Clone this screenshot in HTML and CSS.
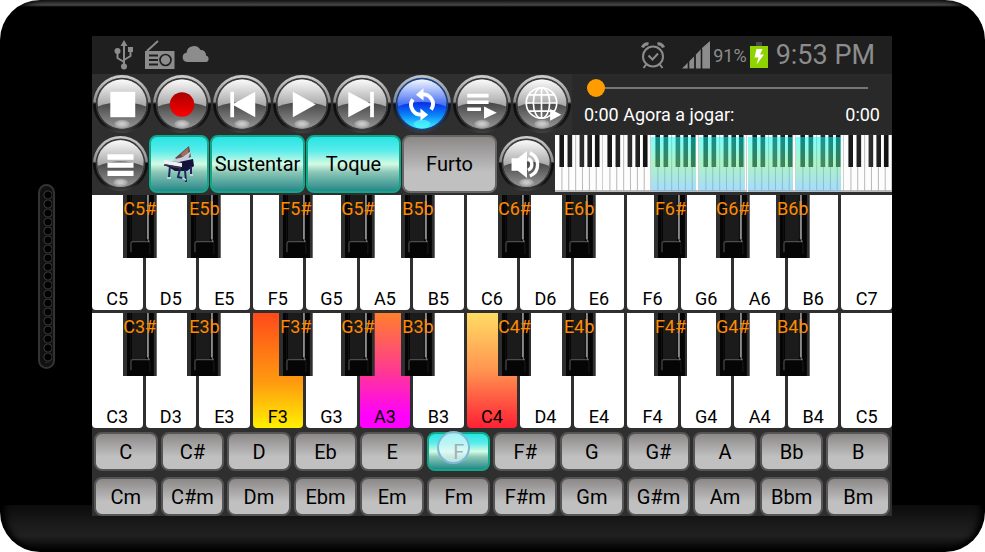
FILE: index.html
```html
<!DOCTYPE html>
<html lang="pt">
<head>
  <meta charset="UTF-8" />
  <meta name="viewport" content="width=device-width, initial-scale=1" />
  <title>Piano</title>
  <link rel="stylesheet" href="styles.css">
</head>
<body>
  <!-- Shared shapes -->
  <svg class="defs" width="0" height="0" aria-hidden="true">
    <defs>
      <linearGradient id="ring" x1="0" y1="0" x2="0" y2="1">
        <stop offset="0" stop-color="#d0d0d0" />
        <stop offset="0.46" stop-color="#8a8a8a" />
        <stop offset="0.5" stop-color="#0c0c0c" />
        <stop offset="0.85" stop-color="#161616" />
        <stop offset="1" stop-color="#444" />
      </linearGradient>
      <linearGradient id="ringBlue" x1="0" y1="0" x2="0" y2="1">
        <stop offset="0" stop-color="#c0c4cc" />
        <stop offset="0.46" stop-color="#7c869a" />
        <stop offset="0.5" stop-color="#0a1228" />
        <stop offset="1" stop-color="#343c48" />
      </linearGradient>
      <linearGradient id="glass" x1="0" y1="0" x2="0" y2="1">
        <stop offset="0" stop-color="#fafafa" />
        <stop offset="0.5" stop-color="#acacac" />
      </linearGradient>
      <linearGradient id="glassLow" x1="0" y1="0" x2="0" y2="1">
        <stop offset="0" stop-color="#444" />
        <stop offset="1" stop-color="#969696" />
      </linearGradient>
      <linearGradient id="blue" x1="0" y1="0" x2="0" y2="1">
        <stop offset="0" stop-color="#f2f6ff" />
        <stop offset="0.5" stop-color="#4a72f4" />
      </linearGradient>
      <linearGradient id="blueLow" x1="0" y1="0" x2="0" y2="1">
        <stop offset="0" stop-color="#0a28e8" />
        <stop offset="0.5" stop-color="#0a86f8" />
        <stop offset="1" stop-color="#3cf4ff" />
      </linearGradient>
      <radialGradient id="shine">
        <stop offset="0.3" stop-color="#d0d0d0" stop-opacity="0.9" />
        <stop offset="1" stop-color="#d0d0d0" stop-opacity="0.3" />
      </radialGradient>
      <linearGradient id="red" x1="0" y1="0" x2="0" y2="1">
        <stop offset="0" stop-color="#a80000" />
        <stop offset="1" stop-color="#ff0000" />
      </linearGradient>
      <linearGradient id="ebony" x1="0" y1="0" x2="1" y2="0">
        <stop offset="0" stop-color="#161616" />
        <stop offset="0.55" stop-color="#2e2e2e" />
        <stop offset="1" stop-color="#101010" />
      </linearGradient>
    </defs>
    <symbol id="orb" viewBox="0 0 57 57">
      <circle cx="28.5" cy="28.5" r="28.5" fill="url(#ring)" />
      <circle cx="28.5" cy="28.5" r="25" fill="none" stroke="#3a3a3a" stroke-width="1.6" />
      <circle cx="28.5" cy="28.5" r="24" fill="url(#glass)" />
      <path d="M4.6 31 Q28.5 22 52.4 31 A24 24 0 0 1 4.6 31Z" fill="url(#glassLow)" />
      <ellipse cx="28.5" cy="48" rx="7.5" ry="4" fill="url(#shine)" />
    </symbol>
    <symbol id="orb-blue" viewBox="0 0 57 57">
      <circle cx="28.5" cy="28.5" r="28.5" fill="url(#ringBlue)" />
      <circle cx="28.5" cy="28.5" r="25" fill="none" stroke="#1c4480" stroke-width="1.6" />
      <circle cx="28.5" cy="28.5" r="24" fill="url(#blue)" />
      <path d="M4.6 31 Q28.5 22 52.4 31 A24 24 0 0 1 4.6 31Z" fill="url(#blueLow)" />
      <ellipse cx="28.5" cy="48" rx="8" ry="4" fill="#5cfcff" opacity="0.6" />
    </symbol>
    <symbol id="black-key" viewBox="0 0 34 63" preserveAspectRatio="none">
      <path d="M0 0h34v63H0z" fill="#2f2f2f" />
      <path d="M4 0h27v63H4z" fill="#050505" />
      <path d="M9 0h14v46H9z" fill="#1b1b1b" />
      <path d="M7 0h1v47H7z" fill="#111" />
      <path d="M24 0h2v44h-2z" fill="#8a8a8a" />
      <path d="M8 57V48Q8 46.5 10 46.5H26" fill="none" stroke="#4c4c4c" stroke-width="1.2" />
      <path d="M25 44l1.500 3" stroke="#777" stroke-width="1.2" />
      <path d="M27 48v11" stroke="#1c1c1c" />
    </symbol>
    <symbol id="octave" viewBox="0 0 48 57" preserveAspectRatio="none">
      <path d="M0 0h48v57H0z" fill="#fdfdfd" />
      <path d="M0 55h48v2H0z" fill="#bcbcbc" />
      <path d="M6.900 0v56M13.700 0v56M20.600 0v56M27.400 0v56M34.300 0v56M41.100 0v56M47.700 0v56" stroke="#a8a8a8" stroke-width="0.8" />
      <path d="M4.400 0h4.600v32H4.400zM12.500 0h4.600v32h-4.600zM24.500 0h4.600v32h-4.600zM32.300 0h4.600v32h-4.600zM39.800 0h4.600v32h-4.600z" fill="url(#ebony)" />
    </symbol>
  </svg>

  <div class="phone">
    <div class="speaker"></div>

    <main class="screen">
      <!-- Status bar -->
      <div class="status">
        <div class="status-left">
          <svg width="20" height="30" viewBox="0 0 20 30" fill="none" stroke="#8c8c8c" stroke-width="2">
            <path d="M10 5v20M10 22L3.500 18V11M10 20l6.500-4V9" />
            <path d="M10 0l3.500 6h-7zM14 7h5v5h-5z" fill="#8c8c8c" stroke="none" />
            <circle cx="3.500" cy="11" r="3" fill="#8c8c8c" stroke="none" />
            <circle cx="10" cy="26.500" r="3" fill="#8c8c8c" stroke="none" />
          </svg>
          <svg width="30" height="30" viewBox="0 0 30 30">
            <path d="M2 11L13 1" stroke="#8c8c8c" stroke-width="2" />
            <path d="M0 11h29.500v18H0z" fill="#8c8c8c" />
            <path d="M4 15.500h9M4 20h9M4 24.500h9" stroke="#1f1f1f" stroke-width="2" />
            <circle cx="20.500" cy="20" r="5.500" fill="none" stroke="#1f1f1f" stroke-width="1.700" />
          </svg>
          <svg width="29" height="30" viewBox="0 0 29 30">
            <path d="M5 22a4.700 4.700 0 0 1-.5-9.300A7.500 7.500 0 0 1 18.500 10a5 5 0 0 1 5.500 5.500A3.400 3.400 0 0 1 24.500 22z" fill="#8c8c8c" />
          </svg>
        </div>
        <div class="status-right">
          <svg width="26" height="28" viewBox="0 0 26 28" fill="none" stroke="#8c8c8c" stroke-width="2">
            <circle cx="13" cy="15.500" r="10" />
            <path d="M8.500 14.500l4 4 5.500-6" />
            <path d="M2.500 6.500a5 5 0 0 1 6-3.500M23.500 6.500a5 5 0 0 0-6-3.500" stroke-width="3.200" />
            <path d="M6.500 23L3.500 27M19.500 23l3 4" />
          </svg>
          <svg class="signal" width="28" height="28" viewBox="0 0 28 28" fill="#8c8c8c">
            <path d="M0 27.500L6 21.500v6zM7 20.500l5.500-5.500v12.500H7zM13.500 14L19 8v19.500h-5.500zM20 7l8-7v27.500h-8z" />
            <path d="M6.500 20v8M13 14v14M19.500 8v20" stroke="#1f1f1f" stroke-width="1.600" />
          </svg>
          <span class="percent">91%</span>
          <svg width="18" height="28" viewBox="0 0 18 28">
            <path d="M6 1h6v4H6z" fill="#484848" />
            <path d="M0 5h18v22H0z" fill="#8fd400" />
            <path d="M6.500 8h6L10 13.500h4L6.500 23.500l2-7H4.500z" fill="#fff" />
          </svg>
          <span class="clock">9:53 PM</span>
        </div>
      </div>

      <!-- Player -->
      <div class="player">
        <div class="transport">
          <button class="orb" type="button" aria-label="Parar">
            <svg viewBox="0 0 57 57"><use href="#orb" /><path d="M17 16.500h24.500v25H17z" fill="#fff" /></svg>
          </button>
          <button class="orb" type="button" aria-label="Gravar">
            <svg viewBox="0 0 57 57"><use href="#orb" /><circle cx="28.500" cy="29" r="12" fill="url(#red)" /></svg>
          </button>
          <button class="orb" type="button" aria-label="Anterior">
            <svg viewBox="0 0 57 57"><use href="#orb" /><path d="M17 16.500h3.700v11.500L41.500 16.500v25L20.700 30v11.500H17z" fill="#fff" /></svg>
          </button>
          <button class="orb" type="button" aria-label="Tocar">
            <svg viewBox="0 0 57 57"><use href="#orb" /><path d="M19.500 16.500L42 29 19.500 41.500z" fill="#fff" /></svg>
          </button>
          <button class="orb" type="button" aria-label="Seguinte">
            <svg viewBox="0 0 57 57"><use href="#orb" /><path d="M15 16.500L36.500 28V16.500h3.700v25h-3.700V30L15 41.500z" fill="#fff" /></svg>
          </button>
          <button class="orb" type="button" aria-label="Repetir">
            <svg viewBox="0 0 57 57">
              <use href="#orb-blue" />
              <path d="M27 19.500A9.500 9.500 0 0 1 37.500 34M30 38.500A9.500 9.500 0 0 1 19.500 24" fill="none" stroke="#fff" stroke-width="3.800" />
              <path d="M30 13v12l-7.500-5.500zM27 33v12l7.500-6z" fill="#fff" />
            </svg>
          </button>
          <button class="orb" type="button" aria-label="Lista">
            <svg viewBox="0 0 57 57"><use href="#orb" /><path d="M14 18.500h21v3.500H14zM14 25h21v3.500H14zM14 32h13.500v3.500H14zM30.500 31L43 37l-12.500 6z" fill="#fff" /></svg>
          </button>
          <button class="orb" type="button" aria-label="Online">
            <svg viewBox="0 0 57 57">
              <use href="#orb" />
              <g fill="none" stroke="#fff" stroke-width="1.600">
                <circle cx="28" cy="27.500" r="15" />
                <ellipse cx="28" cy="27.500" rx="8" ry="15" />
                <path d="M28 12.500v30M13 27.500h30M15.500 19.500h25M15.500 35.500h25" />
              </g>
              <path d="M36.500 33.500l11 5.500-11 6z" fill="#fff" />
            </svg>
          </button>
        </div>
        <div class="now-playing">
          <input class="seek" type="range" min="0" max="100" value="0" aria-label="Posição">
          <div class="times">
            <span>0:00 Agora a jogar:</span>
            <span>0:00</span>
          </div>
        </div>
      </div>

      <!-- Piano options -->
      <div class="options">
        <button class="orb small" type="button" aria-label="Menu">
          <svg viewBox="0 0 57 57"><use href="#orb" /><path d="M15 19h27v5.500H15zM15 27.500h27V33H15zM15 36h27v5.500H15z" fill="#fff" /></svg>
        </button>
        <button class="toggle on instrument" type="button" aria-label="Instrumento">
          <svg width="34" height="38" viewBox="0 0 34 38">
            <path d="M13 13L27 1l2 11-12 4z" fill="#6b4a4c" />
            <path d="M19 9l7-6 1 8-6 2z" fill="#a0705c" />
            <path d="M10 15l11-3 8-6-3 8 6 1-14 3z" fill="#c8ccdc" />
            <path d="M2 16l15 1 14-3 1 7-7 5H13L3 20z" fill="#14143a" />
            <path d="M2 15l18 3v4L2 19z" fill="#f0f0f4" />
            <path d="M2 20l17 3" stroke="#383848" stroke-width="1.500" />
            <path d="M8 21l-1 11M29 21v8M23 25l1 12M18 24l-2 8 4 1" fill="none" stroke="#26265a" stroke-width="2" />
            <path d="M21 33l3 2M5 33h4M28 30h3" stroke="#dcdce8" stroke-width="1.500" />
          </svg>
        </button>
        <button class="toggle on" type="button">Sustentar</button>
        <button class="toggle on" type="button">Toque</button>
        <button class="toggle" type="button">Furto</button>
        <button class="orb small" type="button" aria-label="Volume">
          <svg viewBox="0 0 57 57">
            <use href="#orb" />
            <path d="M13 23h6.500L29 15.500v28L19.500 36H13z" fill="#fff" />
            <path d="M30 23.500a6.500 6.500 0 0 1 0 12M32 17.500a13 13 0 0 1 0 24" fill="none" stroke="#fff" stroke-width="3.500" />
          </svg>
        </button>
        <div class="overview" id="overview"></div>
      </div>

      <!-- Keyboards -->
      <div class="keyboard" id="upper"></div>
      <div class="keyboard" id="lower"></div>

      <!-- Chords -->
      <div class="chords">
        <button class="chord" type="button">C</button>
        <button class="chord" type="button">C#</button>
        <button class="chord" type="button">D</button>
        <button class="chord" type="button">Eb</button>
        <button class="chord" type="button">E</button>
        <button class="chord on" type="button">F<span class="touch"></span></button>
        <button class="chord" type="button">F#</button>
        <button class="chord" type="button">G</button>
        <button class="chord" type="button">G#</button>
        <button class="chord" type="button">A</button>
        <button class="chord" type="button">Bb</button>
        <button class="chord" type="button">B</button>
        <button class="chord" type="button">Cm</button>
        <button class="chord" type="button">C#m</button>
        <button class="chord" type="button">Dm</button>
        <button class="chord" type="button">Ebm</button>
        <button class="chord" type="button">Em</button>
        <button class="chord" type="button">Fm</button>
        <button class="chord" type="button">F#m</button>
        <button class="chord" type="button">Gm</button>
        <button class="chord" type="button">G#m</button>
        <button class="chord" type="button">Am</button>
        <button class="chord" type="button">Bbm</button>
        <button class="chord" type="button">Bm</button>
      </div>
    </main>
  </div>

  <script>
    const notes = ['C', 'D', 'E', 'F', 'G', 'A', 'B'];
    // black key that starts over each white key: [letter, accidental]
    const blacks = { C: ['C', '#'], D: ['E', 'b'], F: ['F', '#'], G: ['G', '#'], A: ['B', 'b'] };

    function buildKeyboard(id, firstOctave, pressed) {
      let html = '';
      for (let i = 0; i < 15; i++) {
        const note = notes[i % 7];
        const octave = firstOctave + Math.floor(i / 7);
        const name = note + octave;
        const cls = pressed.includes(name) ? ` pressed-${name.toLowerCase()}` : '';
        html += `<div class="key"><button class="white${cls}" type="button">${name}</button>`;
        if (blacks[note] && i < 14) {
          const [letter, sign] = blacks[note];
          html += `<button class="black black-${note.toLowerCase()}" type="button">`
            + `<svg><use href="#black-key" /></svg><span>${letter}${octave}${sign}</span></button>`;
        }
        html += '</div>';
      }
      document.getElementById(id).innerHTML = html;
    }

    function buildOverview() {
      let html = '';
      for (let i = 0; i < 7; i++) {
        const visible = i >= 2 && i <= 5;
        html += `<div class="octave${visible ? ' visible' : ''}"><svg><use href="#octave" /></svg></div>`;
      }
      document.getElementById('overview').innerHTML = html;
    }

    buildKeyboard('upper', 5, []);
    buildKeyboard('lower', 3, ['F3', 'A3', 'C4']);
    buildOverview();
  </script>
</body>
</html>
```

FILE: styles.css
```css
* {
  margin: 0;
  padding: 0;
  box-sizing: border-box;
}
body {
  font-family: Roboto, sans-serif;
  background: #fff;
  color: #000;
}
button {
  font-family: inherit;
  font-weight: 300;
  color: #000;
  border: none;
  background: none;
  cursor: pointer;
}
svg {
  display: block;
}
.defs {
  position: absolute;
}

/* Phone body */
.phone {
  min-height: 100vh;
  display: grid;
  grid-template-columns: 92px 1fr 93px;
  padding: 36px 0;
  border-radius: 40px;
  background:
    linear-gradient(#444, #505050 5px, transparent 7px),
    linear-gradient(to top, #000, #202020 16px, #1a1a1a 28px, #0c0c0c 47px, transparent 47px),
    #000;
  box-shadow: inset 5px 0 6px #000, inset -5px 0 6px #000;
}
.speaker {
  align-self: center;
  justify-self: center;
  width: 17px;
  height: 185px;
  border: 2px solid #333;
  border-radius: 9px;
  padding: 4px 1px;
  background: radial-gradient(circle at 7px 5px, #000 3px, #3a3a3a 4px, #111 5px) content-box 0 0 / 13px 9px, #111;
}
.screen {
  display: flex;
  flex-direction: column;
  min-width: 0;
  background: #2f2f2f;
}

/* Status bar */
.status {
  height: 38px;
  display: flex;
  justify-content: space-between;
  align-items: center;
  padding: 0 17px 0 22px;
  background: #1f1f1f;
  color: #8c8c8c;
}
.status-left {
  display: flex;
  gap: 11px;
}
.status-left svg + svg + svg {
  margin-left: -4px;
}
.status-right {
  display: flex;
  align-items: center;
  gap: 3px;
}
.signal {
  margin-left: 13px;
}
.percent {
  font-size: 18px;
}
.clock {
  margin-left: 5px;
  font-size: 27px;
  line-height: 38px;
}

/* Player */
.player {
  display: flex;
}
.transport {
  display: flex;
}
.orb {
  width: 60px;
  height: 60px;
  padding: 1px;
}
.orb.small {
  flex: none;
  width: 57px;
}
.now-playing {
  flex: 1;
  padding: 5px 12px 0 12px;
  background: #292929;
}
.seek {
  -webkit-appearance: none;
  appearance: none;
  display: block;
  width: calc(100% - 15px);
  height: 18px;
  margin-left: 3px;
  background: linear-gradient(#777, #777) center / 100% 2px no-repeat;
}
.seek::-webkit-slider-thumb {
  -webkit-appearance: none;
  width: 18px;
  height: 18px;
  border-radius: 50%;
  background: #ff9c00;
}
.times {
  display: flex;
  justify-content: space-between;
  margin-top: 7px;
  font-size: 18px;
  line-height: 22px;
  color: #fff;
}

/* Options */
.options {
  display: flex;
  align-items: center;
  height: 61px;
  padding-bottom: 2px;
}
.toggle {
  flex: none;
  width: 95px;
  height: 58px;
  margin-right: 1px;
  border: 2px solid #666;
  border-radius: 8px;
  background: linear-gradient(#8c8888, #c0c0c0 65%);
  font-size: 20px;
  font-weight: 400;
}
.toggle.instrument {
  width: 60px;
}
.instrument svg {
  margin: 0 auto;
}
.toggle.on,
.chord.on {
  border-color: #10a888;
  background: linear-gradient(#28e4e4, #58ecea 25%, #d4fbe4 50%, #8cc8b8 65%, #268888);
}
.overview {
  flex: 1;
  display: flex;
  height: 57px;
  background: #fff;
}
.octave {
  position: relative;
  flex: 1;
}
.octave svg {
  width: 100%;
  height: 100%;
}
.octave.visible::after {
  content: "";
  position: absolute;
  inset: 2px 3px 1px 0;
  background: linear-gradient(#00ffff, #60e890 50%, #50b8ff);
  opacity: 0.5;
}

/* Keyboards */
.keyboard {
  flex: 1;
  display: flex;
  gap: 3px;
  min-height: 115px;
  margin-bottom: 3px;
}
.key {
  position: relative;
  flex: 1;
}
.white {
  display: flex;
  align-items: flex-end;
  justify-content: center;
  width: 100%;
  height: 100%;
  border-radius: 0 0 4px 4px;
  background: #fff;
  font-size: 18px;
  font-weight: 400;
  line-height: 22px;
}
.pressed-f3 {
  background: linear-gradient(#ff4a1a, #ff9a10 60%, #fff000);
}
.pressed-a3 {
  background: linear-gradient(#ff802c, #ff3a90 50%, #ff00ff 90%);
}
.pressed-c4 {
  background: linear-gradient(#ffdc64, #ff9450 50%, #ff2034);
}
.black {
  position: absolute;
  top: 0;
  z-index: 1;
  width: 67%;
  height: 55%;
}
.black svg {
  width: 100%;
  height: 100%;
}
.black span {
  position: absolute;
  inset: 3px 0 auto;
  font-size: 18px;
  font-weight: 400;
  line-height: 22px;
  color: #ff8a00;
}
.black-c {
  left: 61%;
}
.black-d {
  left: 83%;
}
.black-f {
  left: 52%;
}
.black-g {
  left: 69%;
}
.black-a {
  left: 82%;
}

/* Chords */
.chords {
  display: grid;
  grid-template-columns: repeat(12, 1fr);
  gap: 6px 3px;
  padding: 1px 2px 0;
}
.chord {
  position: relative;
  height: 39px;
  border: 2px solid #555;
  border-radius: 8px;
  background: linear-gradient(#8c8888, #c0c0c0 65%);
  font-size: 20px;
  font-weight: 400;
}
.touch {
  position: absolute;
  top: -3px;
  left: 8px;
  width: 33px;
  height: 33px;
  border: 2px solid #80b8d8;
  border-radius: 50%;
  background: rgba(225, 250, 250, 0.7);
}
```
